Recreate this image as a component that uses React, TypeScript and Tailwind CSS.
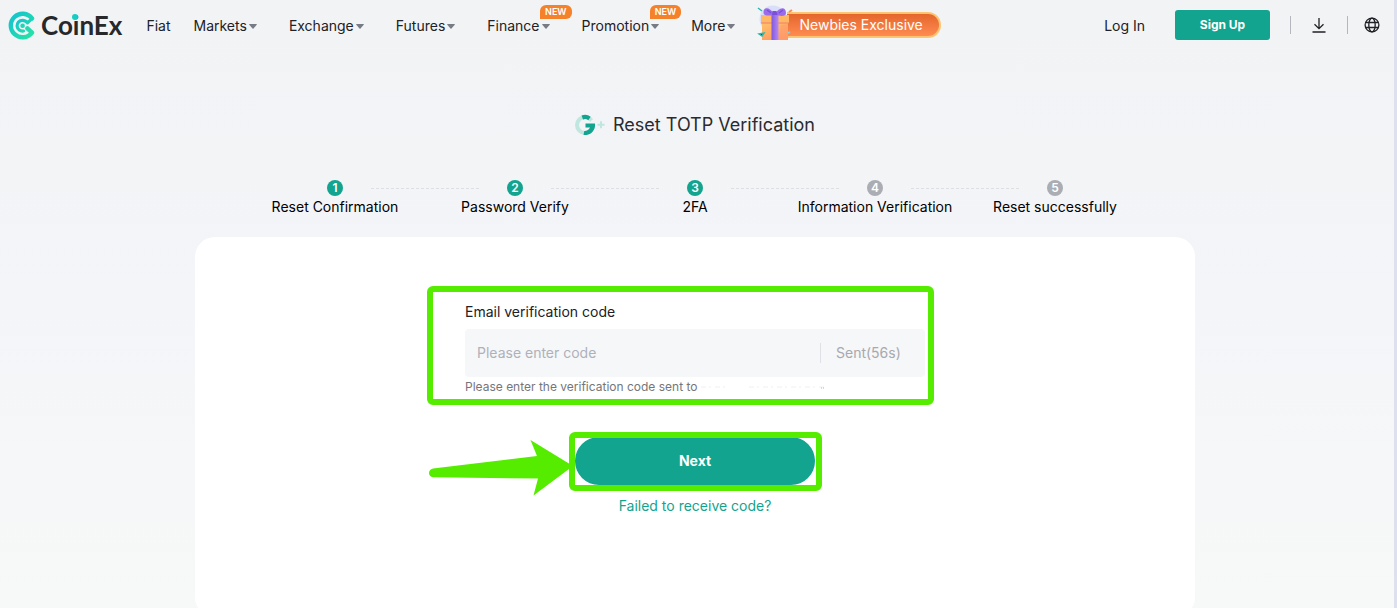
import { useState } from "react";

const navItems = [
  { name: "Markets" },
  { name: "Exchange" },
  { name: "Futures" },
  { name: "Finance", isNew: true },
  { name: "Promotion", isNew: true },
  { name: "More" },
];

const steps = [
  "Reset Confirmation",
  "Password Verify",
  "2FA",
  "Information Verification",
  "Reset successfully",
];
const currentStep = 3;

function Logo() {
  return (
    <a href="#" className="flex items-center gap-1.5">
      <svg viewBox="0 0 27 29" className="h-[29px] w-[27px]" fill="none">
        <defs>
          <linearGradient id="logo" x1="0" y1="0" x2="1" y2="1">
            <stop offset="0" stopColor="#12c3cf" />
            <stop offset="1" stopColor="#27e3a6" />
          </linearGradient>
        </defs>
        <path
          d="M24 7.4A11.800 11.800 0 1 0 24 21.600L19.400 17.400"
          stroke="url(#logo)"
          strokeWidth="4.400"
          strokeLinejoin="round"
          strokeLinecap="round"
        />
        <path
          d="M24 7.600L19.500 11.800Q17.500 9.300 14.500 9.300A5.400 5.400 0 1 0 15.500 20"
          stroke="url(#logo)"
          strokeWidth="3.200"
          strokeLinecap="round"
          strokeLinejoin="round"
        />
        <circle cx="14.600" cy="14.800" r="2.300" fill="#1fd6b6" />
      </svg>
      <span className="relative font-[Lato] text-[26px] leading-8 font-bold text-[#26282c]">
        CoinEx
        <span className="absolute top-[5px] left-[31px] size-[6px] rounded-full bg-[#17cfc0]" />
      </span>
    </a>
  );
}

function Gift() {
  return (
    <svg viewBox="0 0 36 36" className="relative z-10 -mr-1.5 h-9 w-9">
      <defs>
        <linearGradient id="box" x1="0" y1="0" x2="0.4" y2="1">
          <stop offset="0" stopColor="#ffc56b" />
          <stop offset="1" stopColor="#ff9d62" />
        </linearGradient>
        <linearGradient id="ribbon" x1="0" y1="0" x2="1" y2="0">
          <stop offset="0" stopColor="#8058dc" />
          <stop offset="1" stopColor="#b48af5" />
        </linearGradient>
      </defs>
      <circle cx="16" cy="14" r="13.5" fill="#d9defa" />
      <path d="M5 16h26v19H5z" fill="url(#box)" />
      <path d="M4 10h28v8H4z" fill="#ffb866" />
      <path d="M4 18h28" stroke="#f27c68" strokeWidth="1" />
      <path d="M24 20l7-1v16h-10z" fill="#ff9a70" opacity="0.5" />
      <path d="M14.500 10h7v25h-7z" fill="url(#ribbon)" />
      <path
        d="M17.500 9C12 1 6 2 6.500 8c0 3 6 3 11 2zM18 9c4-7 11-8 11-1 0 4-6 3-11 2z"
        fill="#9a6ce9"
      />
      <path d="M10 5l4 3M26 5l-4 3" stroke="#7a50d8" strokeWidth="1.500" />
      <path d="M15.500 6h4l1 4h-5.500z" fill="#7a50d8" />
      <path d="M1 3l4 3M2 29l5-1-2 3z" stroke="#2ab9ad" strokeWidth="1.500" />
      <path d="M32 7l3-2" stroke="#f58c5f" strokeWidth="2" />
      <path d="M31 28l2-1" stroke="#7fd6e8" strokeWidth="1.500" />
    </svg>
  );
}

function Header() {
  return (
    <header className="flex h-[50px] items-center pr-2.5 pl-2 text-sm text-[#202126]">
      <Logo />
      <nav className="ml-6 flex items-center pt-0.5">
        <a href="#" className="mr-[23px]">
          Fiat
        </a>
        {navItems.map((item) => (
          <a
            key={item.name}
            href="#"
            className="relative mr-8 flex items-center gap-0.5 last:mr-[22px]"
          >
            {item.name}
            <svg viewBox="0 0 8 5" className="h-[5px] w-2" fill="#777b85">
              <path d="M0.500 0h7q.6.200.2.700L4.500 4.600q-.5.500-1 0L.300.700Q0 .200.500 0z" />
            </svg>
            {item.isNew && (
              <span className="absolute -top-[11px] -right-[22px] h-3.5 rounded-t-md rounded-br-md bg-[#f5812a] px-[5px] text-[9px] leading-3.5 font-semibold text-white">
                NEW
              </span>
            )}
          </a>
        ))}
      </nav>
      <a href="#" className="flex items-center pb-1">
        <Gift />
        <span className="mt-1 rounded-r-full border-2 border-l-0 border-[#ffc46f] bg-linear-to-b from-[#e4662c] to-[#ff8b50] pr-4 pl-3 text-sm leading-[22px] text-white">
          Newbies Exclusive
        </span>
      </a>
      <div className="ml-auto flex items-center">
        <a href="#" className="mr-[30px] pt-0.5">
          Log In
        </a>
        <button className="h-[30px] w-[95px] rounded-[3px] bg-[#12a48e] text-xs font-bold text-white">
          Sign Up
        </button>
        <span className="ml-5 h-[18px] w-px bg-[#b4b7bd]" />
        <button aria-label="Download" className="mx-5">
          <svg
            viewBox="0 0 16 16"
            className="size-4"
            fill="none"
            stroke="#202126"
            strokeWidth="1.300"
          >
            <path d="M8 1v10.500M3.500 7.300L8 11.700l4.500-4.400M1.500 15h13" />
          </svg>
        </button>
        <span className="h-[18px] w-px bg-[#b4b7bd]" />
        <button aria-label="Language" className="ml-4">
          <svg
            viewBox="0 0 16 16"
            className="size-4"
            fill="none"
            stroke="#202126"
            strokeWidth="1.300"
          >
            <circle cx="8" cy="8" r="6.900" />
            <ellipse cx="8" cy="8" rx="3.200" ry="6.900" />
            <path d="M1.700 5.500h12.600M1.700 10.500h12.600" />
          </svg>
        </button>
      </div>
    </header>
  );
}

function Steps() {
  return (
    <div className="mx-auto mt-[41px] w-full max-w-[900px]">
      <div className="flex items-center px-[82px]">
        {steps.map((step, i) => (
          <div
            key={step}
            className={i > 0 ? "flex flex-1 items-center" : "flex items-center"}
          >
            {i > 0 && (
              <svg className="mr-7 ml-7 h-px w-0 flex-1">
                <path d="M0 .5H400" stroke="#dddfe3" strokeDasharray="3 2" />
              </svg>
            )}
            <span
              className={`size-4 rounded-full text-center text-xs leading-4 font-semibold text-white ${
                i < currentStep ? "bg-[#12a48e]" : "bg-[#abadb5]"
              }`}
            >
              {i + 1}
            </span>
          </div>
        ))}
      </div>
      <ol className="grid grid-cols-5 text-center text-sm leading-[22px] text-black">
        {steps.map((step) => (
          <li key={step}>{step}</li>
        ))}
      </ol>
    </div>
  );
}

export default function App() {
  const [code, setCode] = useState("");

  return (
    <div className="h-screen overflow-hidden border-r-3 border-[#dce1ed] bg-linear-to-b from-[#f2f3f5] via-[#f4f5f8] to-[#f7f9f8] pr-1 font-[Inter,sans-serif]">
      <Header />

      <main className="px-4">
        {/* Title */}
        <h1 className="mt-[61px] flex items-center justify-center gap-2 text-lg text-[#2a2b30]">
          <svg viewBox="0 0 30 22" className="h-[22px] w-[30px]" fill="none">
            <circle cx="10" cy="11" r="8" stroke="#bfe6df" strokeWidth="4" />
            <path d="M12 11h10v-9l-5 4z" fill="#f3f4f6" />
            <path
              d="M7.300 3.500A8 8 0 0 1 14.500 4.400"
              stroke="#12a48e"
              strokeWidth="4.200"
            />
            <path
              d="M10.500 9.500h9.400A10 10 0 0 1 8.500 21l.8-4.100a6 6 0 0 0 5.700-3.400h-4.500z"
              fill="#12a48e"
            />
            <path d="M22.500 10.700h7M26 7.200v7" stroke="#bfe6df" strokeWidth="2" />
          </svg>
          Reset TOTP Verification
        </h1>

        <Steps />

        {/* Card */}
        <section className="mx-auto mt-[19px] flex h-[380px] w-full max-w-[1000px] flex-col items-center rounded-[20px] bg-white pt-16">
          <form className="flex w-full max-w-[460px] flex-col items-center">
            <div className="relative w-full">
              <label
                htmlFor="code"
                className="block text-sm leading-[22px] text-[#202126]"
              >
                Email verification code
              </label>
              <div className="mt-1.5 flex h-12 items-center rounded-sm bg-[#f6f7f9] text-sm">
                <input
                  id="code"
                  value={code}
                  onChange={(e) => setCode(e.target.value)}
                  placeholder="Please enter code"
                  className="h-full min-w-0 flex-1 bg-transparent px-3 pb-0.5 outline-none placeholder:text-[#aeb1b9]"
                />
                <button
                  type="button"
                  className="h-5 w-[105px] border-l border-[#dfe1e6] pl-[15px] text-left leading-5 text-[#a8a9ad]"
                >
                  Sent(56s)
                </button>
              </div>
              <p className="flex items-center text-xs leading-5 text-[#75767a]">
                Please enter the verification code sent to
                <svg className="ml-1 h-1 w-32">
                  <path
                    d="M0 2h24M48 2h76"
                    stroke="#f0f0f0"
                    strokeDasharray="5 3 2 4"
                  />
                  <path d="M120 3h4" stroke="#b5b5b5" strokeDasharray="1 1" />
                </svg>
              </p>
              {/* highlight */}
              <div className="pointer-events-none absolute -top-[15px] -right-[9px] -bottom-2 -left-[38px] rounded-md border-6 border-[#55ec00]" />
            </div>

            <div className="relative mt-10">
              <button
                type="button"
                className="block h-12 w-60 rounded-full bg-[#12a48e] text-sm font-bold text-white"
              >
                Next
              </button>
              <svg
                viewBox="0 0 146 58"
                className="pointer-events-none absolute top-0.5 -left-[147px] h-[58px] w-[146px]"
                fill="#55ec00"
              >
                <path d="M5 29.500L109 17 102.500 1 145 27 105.500 56.500 110 39.500 5 38.200Q1 37.500 1 34T5 29.500z" />
              </svg>
              <div className="pointer-events-none absolute -top-[5px] -right-[7px] -bottom-1.5 -left-1.5 rounded-md border-6 border-[#55ec00]" />
            </div>
            <a href="#" className="mt-2.5 text-sm leading-[22px] text-[#12a48e]">
              Failed to receive code?
            </a>
          </form>
        </section>
      </main>
    </div>
  );
}
